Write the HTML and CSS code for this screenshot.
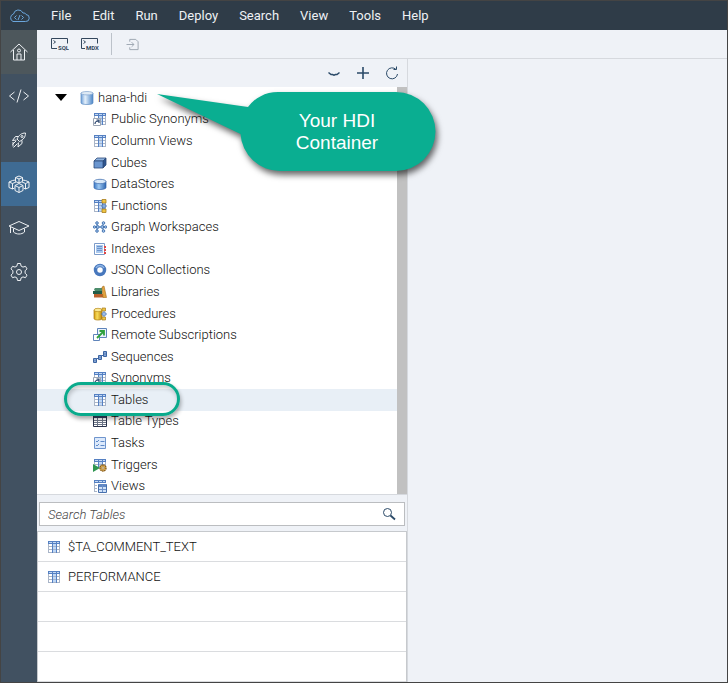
FILE: index.html
```html
<!DOCTYPE html>
<html lang="en">
<head>
<meta charset="utf-8">
<title>Database Explorer</title>
<link rel="stylesheet" href="styles.css">
</head>
<body>
<svg class="sprite" aria-hidden="true">
  <defs>
    <linearGradient id="cyl" x1="0" x2="1" y1="0" y2="0"><stop offset="0" stop-color="#6f9fd8"/><stop offset=".35" stop-color="#e4f0fb"/><stop offset="1" stop-color="#4c86c8"/></linearGradient>
    <linearGradient id="blue" x1="0" x2="1" y1="0" y2="0"><stop offset="0" stop-color="#3c78c4"/><stop offset=".4" stop-color="#9cc8f2"/><stop offset="1" stop-color="#2e66b0"/></linearGradient>
    <linearGradient id="gold" x1="0" x2="1" y1="0" y2="0"><stop offset="0" stop-color="#d39a12"/><stop offset=".4" stop-color="#f8dc5a"/><stop offset="1" stop-color="#bd850c"/></linearGradient>
  </defs>
  <symbol id="grid" viewBox="0 0 14 14">
    <path fill="#a9b5c8" d="M1 1h12v12H1z"/>
    <path fill="#5580c2" d="M1 1h12v3H1zM5 4h1v9H5zM9 4h1v9H9z"/>
    <path fill="#c3d8f3" d="M2 2h3v1H2zM6 2h3v1H6zM10 2h2v1h-2z"/>
    <path fill="#fff" d="M2 4h3v2H2zM2 7h3v2H2zM2 10h3v2H2zM10 4h2v2h-2zM10 7h2v2h-2zM10 10h2v2h-2z"/>
    <path fill="#bdd7f7" d="M6 4h3v2H6zM6 7h3v2H6zM6 10h3v2H6z"/>
  </symbol>
  <symbol id="synonym" viewBox="0 0 14 14">
    <use href="#grid" width="14" height="14"/><path fill="#fff" stroke="#9aa4b3" d="M.5 6.500h7v7h-7z"/><path fill="none" stroke="#29436c" stroke-width="1.200" d="M2 12c0-2 1-3 3.500-3M3.500 8H6v3"/>
  </symbol>
  <symbol id="cube" viewBox="0 0 14 14">
    <path fill="#8fb3de" stroke="#2c4a78" stroke-width=".8" d="M1 5l3-3h9l-3 3z"/><path fill="#2f558e" stroke="#2c4a78" stroke-width=".8" d="M10 5l3-3v7l-3 3z"/><path fill="#6b96cf" stroke="#2c4a78" stroke-width=".8" d="M1 5h9v7H1z"/>
  </symbol>
  <symbol id="store" viewBox="0 0 14 14">
    <path fill="url(#blue)" stroke="#3566ac" stroke-width=".7" d="M1 4.500v6c0 2.700 12 2.700 12 0v-6z"/><ellipse cx="7" cy="4.500" rx="6" ry="2.200" fill="#d8e8f8" stroke="#4a76b4" stroke-width=".8"/>
  </symbol>
  <symbol id="database" viewBox="0 0 14 14">
    <path fill="url(#cyl)" stroke="#5d8cc2" stroke-width=".7" d="M1 2v10c0 2 12 2 12 0V2z"/><ellipse cx="7" cy="2.200" rx="6" ry="1.700" fill="#dfeaf5" stroke="#7fa3ce" stroke-width=".7"/>
  </symbol>
  <symbol id="function" viewBox="0 0 14 14">
    <use href="#grid" width="14" height="14"/><path fill="#efc544" stroke="#a87d1d" stroke-width=".8" d="M9 .5h4v3.500H9zM9 10h4v3.500H9z"/><path fill="#86aadd" stroke="#3e69a6" stroke-width=".8" d="M11 4.500L13.500 7 11 9.500 8.500 7z"/>
  </symbol>
  <symbol id="graph" viewBox="0 0 14 14">
    <path stroke="#4673ad" d="M4 3.500v7M4 7h6M10 3.500v7M1.500 7H4M10 7h2.500"/>
    <g fill="#a9caf0" stroke="#3c6dac" stroke-width=".9"><circle cx="4" cy="3" r="1.300"/><circle cx="4" cy="11" r="1.300"/><circle cx="1.500" cy="7" r="1.200"/><circle cx="4.800" cy="7" r="1.400"/><circle cx="9.200" cy="7" r="1.400"/><circle cx="10.500" cy="3" r="1.300"/><circle cx="10.500" cy="11" r="1.300"/><circle cx="12.600" cy="7" r="1.200"/></g>
  </symbol>
  <symbol id="index" viewBox="0 0 14 14">
    <path fill="#fff" stroke="#7c9bc9" d="M1.500 1.500h10v11h-10z"/><path fill="#a9c8ee" d="M3 3h7v8H3z"/><path stroke="#6b93cb" d="M4 4.500h5M4 6.500h5M4 8.500h5"/><path stroke="#e04545" stroke-width="2" stroke-dasharray="2 1" d="M12 4v9"/>
  </symbol>
  <symbol id="ring" viewBox="0 0 14 14">
    <circle cx="7" cy="7" r="4.500" fill="#fff" stroke="#4878bd" stroke-width="3.500"/><path fill="none" stroke="#92b7e6" stroke-width="1.500" d="M3 5a4.500 4.500 0 0 1 8 0"/>
  </symbol>
  <symbol id="books" viewBox="0 0 14 14">
    <path fill="#4d8d6c" d="M2 3h7v3H2L1 4.500z"/><path fill="#205c48" d="M0 6h9v3H0z"/><path fill="#b9602c" d="M1 9h9v3.500H1z"/><path fill="#e2a440" stroke="#a56a18" stroke-width=".6" d="M9 2l2-1 2.500 11.500H10z"/>
  </symbol>
  <symbol id="procedure" viewBox="0 0 14 14">
    <path fill="url(#gold)" stroke="#a77910" stroke-width=".7" d="M1 3v8.500c0 2 8 2 8 0V3z"/><ellipse cx="5" cy="3" rx="4" ry="1.700" fill="#fae996" stroke="#b98a1a" stroke-width=".7"/><path fill="#efc544" stroke="#a87d1d" stroke-width=".7" d="M9 1h3.500v3H9zM9 10h3.500v3H9z"/><path fill="#9cbce8" stroke="#3e69a6" stroke-width=".8" d="M11 4.500L13.500 7 11 9.500 8.500 7z"/>
  </symbol>
  <symbol id="remote" viewBox="0 0 14 14">
    <path fill="#eaf2fc" stroke="#5f84ba" d="M4.500.5h9v9h-9z"/><path fill="#fff" stroke="#5f84ba" d="M.5 6.500h6v6h-6z"/><path fill="none" stroke="#2fa13c" stroke-width="1.800" d="M4 10l6.500-6.500M6.500 3H11v4.500"/>
  </symbol>
  <symbol id="sequence" viewBox="0 0 14 14">
    <g fill="#9dbbe6" stroke="#3d65a2"><path d="M.5 8.500h3v4h-3zM5.500 5.500h3v4h-3zM10.500 1.500h3v5h-3z"/></g><path stroke="#3d65a2" d="M3.500 8.500h2M8.500 5.500h2M2 9.500v2M7 6.500v2M12 2.500v3"/>
  </symbol>
  <symbol id="tabletype" viewBox="0 0 14 14">
    <path fill="#fff" stroke="#29334c" d="M.5 1.500h13v11H.5z"/><path fill="#334163" d="M1 1h12v3H1z"/><path stroke="#6d7688" d="M1 6.500h12M1 8.500h12M1 10.500h12M4.500 4v8M9.500 4v8"/>
  </symbol>
  <symbol id="task" viewBox="0 0 14 14">
    <path fill="#dce9fb" stroke="#6f95cd" d="M1.500 1.500h11v11h-11z"/><path fill="none" stroke="#5e8ac8" d="M3 5l1 1 2-2M3 9l1 1 2-2M7.500 5.500h4M7.500 9.500h4"/>
  </symbol>
  <symbol id="trigger" viewBox="0 0 14 14">
    <use href="#grid" width="14" height="14"/><path fill="#fff" d="M0 10h14v4H0z"/><path fill="#2f9651" d="M0 6l7 4-7 4z"/><circle cx="10" cy="10" r="3" fill="#e5b85a" stroke="#8b5d17" stroke-width="1.400" stroke-dasharray="1.500 .5"/><circle cx="10" cy="10" r="1.200" fill="#fff" stroke="#8b5d17" stroke-width=".7"/>
  </symbol>
  <symbol id="view" viewBox="0 0 14 14">
    <use href="#grid" width="14" height="14"/><path fill="#fff" d="M4 4h10v10H4z"/><path fill="#cfe1f7" stroke="#466fac" d="M5.500 5.500h8v8h-8z"/><path fill="#5f87c4" d="M6 5h7v3H6z"/><path stroke="#6d90c8" d="M9.500 6v7M6 10.500h7"/>
  </symbol>
</svg>

<div class="app">
  <header class="menubar">
    <svg class="logo" viewBox="0 0 22 14" aria-hidden="true"><path d="M5 12.500h12.500a3.500 3.500 0 0 0 .5-7 2.500 2.500 0 0 0-3-1.500A5 5 0 0 0 5.500 5 4 4 0 0 0 5 12.500z"/><path d="M8.500 6.500l-2 2 2 2M13.500 6.500l2 2-2 2M12 6l-2 5"/></svg>
    <nav class="menus">
      <button>File</button><button>Edit</button><button>Run</button><button>Deploy</button><button>Search</button><button>View</button><button>Tools</button><button>Help</button>
    </nav>
  </header>

  <div class="workspace">
    <nav class="rail">
      <button class="home" aria-label="Home"><svg viewBox="0 0 20 20"><path d="M1.500 10L10 2l8.500 8M4.500 8v10h11V8M8 18v-6h4v6"/><circle cx="10" cy="8.500" r="1.500"/></svg></button>
      <button aria-label="Development"><svg viewBox="0 0 20 20"><path d="M5.500 6L0.500 10l5 4M14.500 6l5 4-5 4M12 3.500L8 16.500"/></svg></button>
      <button aria-label="Run console"><svg viewBox="0 0 20 20"><path d="M16.500 3c-4 0-6.500 2-8.500 6l2.500 2.500c4-2 6-4.500 6-8.500zM9.500 6.500H6.500L3.500 10.500l4-.5M13 10.500v3L9 17l.5-4.500M7 11l-3.500 3.500M4 12v4.500M8.500 13.500L4.500 17.500"/><circle cx="13" cy="6.500" r="1"/></svg></button>
      <button class="active" aria-label="Database Explorer"><svg viewBox="0 0 22 18"><path d="M11 1l3.500 1.500v4L11 8 7.500 6.500v-4zM7.500 2.500L11 4l3.500-1.500M11 4v4M7.500 5L4.500 5.500 1 7v5.500L4.500 14l2-1M1 7l3.500 1.500L8 7M4.500 8.500V14M14.500 5l3 .5L21 7v5.500L17.500 14l-2-1M14 7l3.500 1.500L21 7M17.500 8.500V14M11 8.500l4 2v5L11 17.500l-4-2v-5zM7 10.500l4 2 4-2M11 12.500v5"/></svg></button>
      <button aria-label="Learning"><svg viewBox="0 0 22 18"><path d="M1 7l10-4.500L21 7l-10 4.500zM5.500 9.500V13c3 2.700 8 2.700 11 0V9.500M2.500 8v6"/></svg></button>
      <button aria-label="Settings"><svg viewBox="0 0 20 20"><path d="M8.500 1.500h3l.6 2.600 1.900 1 2.500-.8 1.500 2.600-1.900 1.900v2.400l1.900 1.900-1.500 2.600-2.500-.8-1.900 1-.6 2.600h-3l-.6-2.600-1.900-1-2.500.8L2 13.100l1.900-1.900V8.800L2 6.900l1.500-2.600 2.500.8 1.900-1z"/><circle cx="10" cy="10" r="2.500"/></svg></button>
    </nav>

    <div class="content">
      <div class="toolbar">
        <button aria-label="Open SQL console"><svg viewBox="0 0 18 13"><path d="M6 10.500H.5V.5h16v5M2.500 2.500l2 1.500-2 1.500"/><text x="7" y="12">SQL</text></svg></button>
        <button aria-label="Open MDX console"><svg viewBox="0 0 18 13"><path d="M4 10.500H.5V.5h16v5M2.500 2.500l2 1.500-2 1.500"/><text x="5" y="12">MDX</text></svg></button>
        <span class="divider"></span>
        <button class="muted" aria-label="Import" disabled><svg viewBox="0 0 14 14"><path d="M3.500 4V1.500H10l2.500 2.500v8.500h-9V10M0 7h8M5.500 4.500L8 7l-2.500 2.500"/></svg></button>
      </div>

      <div class="panes">
        <section class="explorer">
          <div class="actions">
            <button aria-label="Collapse"><svg viewBox="0 0 14 14"><path stroke-width="1.500" d="M1.500 6.500L4 8.500h1.500L7 9.200l1.500-.7H10l2.500-2"/></svg></button>
            <button aria-label="Add database"><svg viewBox="0 0 14 14"><path stroke-width="1.600" d="M7 1v12M1 7h12"/></svg></button>
            <button aria-label="Refresh"><svg viewBox="0 0 14 14"><path d="M11 3.500A5.500 5.500 0 1 0 12.500 8M8.500 3.500h3V.5"/></svg></button>
          </div>
          <div class="tree">
            <ul class="nodes">
              <li class="root"><svg class="caret" viewBox="0 0 12 7" aria-hidden="true"><path d="M0 0h12L6 7z"/></svg><svg class="icon"><use href="#database"/></svg>hana-hdi</li>
              <li><svg class="icon"><use href="#synonym"/></svg>Public Synonyms</li>
              <li><svg class="icon"><use href="#grid"/></svg>Column Views</li>
              <li><svg class="icon"><use href="#cube"/></svg>Cubes</li>
              <li><svg class="icon"><use href="#store"/></svg>DataStores</li>
              <li><svg class="icon"><use href="#function"/></svg>Functions</li>
              <li><svg class="icon"><use href="#graph"/></svg>Graph Workspaces</li>
              <li><svg class="icon"><use href="#index"/></svg>Indexes</li>
              <li><svg class="icon"><use href="#ring"/></svg>JSON Collections</li>
              <li><svg class="icon"><use href="#books"/></svg>Libraries</li>
              <li><svg class="icon"><use href="#procedure"/></svg>Procedures</li>
              <li><svg class="icon"><use href="#remote"/></svg>Remote Subscriptions</li>
              <li><svg class="icon"><use href="#sequence"/></svg>Sequences</li>
              <li><svg class="icon"><use href="#synonym"/></svg>Synonyms</li>
              <li class="selected"><svg class="icon"><use href="#grid"/></svg>Tables<span class="marker"></span></li>
              <li><svg class="icon"><use href="#tabletype"/></svg>Table Types</li>
              <li><svg class="icon"><use href="#task"/></svg>Tasks</li>
              <li><svg class="icon"><use href="#trigger"/></svg>Triggers</li>
              <li><svg class="icon"><use href="#view"/></svg>Views</li>
            </ul>
            <span class="scrollbar"></span>
          </div>
          <div class="search">
            <input type="text" placeholder="Search Tables" aria-label="Search Tables">
            <button aria-label="Search"><svg viewBox="0 0 14 14"><circle cx="5.500" cy="5.500" r="4"/><path stroke-width="1.800" d="M8.500 8.500l4.500 4"/></svg></button>
          </div>
          <ul class="results">
            <li><svg class="icon"><use href="#grid"/></svg>$TA_COMMENT_TEXT</li>
            <li><svg class="icon"><use href="#grid"/></svg>PERFORMANCE</li>
            <li></li>
            <li></li>
            <li></li>
          </ul>
        </section>
        <main class="editor"></main>
        <div class="callout">
          <svg viewBox="0 0 280 80" aria-hidden="true"><path d="M0 2L91 15C98 6 108 0 121 0h118a39.500 39.500 0 0 1 0 79H123a39.500 39.500 0 0 1-39.500-37z"/></svg>
          <p>Your HDI<br>Container</p>
        </div>
      </div>
    </div>
  </div>
</div>
</body>
</html>
```

FILE: styles.css
```css
* {
  box-sizing: border-box;
}

body {
  margin: 0;
  font: 300 13px/20px Roboto, "Liberation Sans", sans-serif;
  color: #111;
}

button {
  display: flex;
  align-items: center;
  justify-content: center;
  padding: 0;
  border: 0;
  background: none;
  color: inherit;
  font: inherit;
}

button svg {
  fill: none;
  stroke: currentColor;
}

ul {
  margin: 0;
  padding: 0;
  list-style: none;
}

.sprite {
  position: absolute;
  width: 0;
  height: 0;
}

.app {
  display: flex;
  flex-direction: column;
  height: 100vh;
  border: 1px solid #444;
  background: #eff2f7;
}

.menubar {
  display: flex;
  align-items: center;
  gap: 21px;
  height: 29px;
  padding-left: 7px;
  background: #2f3c48;
  color: #eef1f4;
  font-weight: 400;
}

.logo {
  width: 22px;
  height: 14px;
  fill: none;
  stroke: #6ba6dc;
}

.menus {
  display: flex;
  gap: 21px;
}

.workspace,
.panes {
  display: flex;
  flex: 1;
  min-height: 0;
}

.rail {
  width: 36px;
  background: #415161;
  color: #eef1f4;
}

.rail button {
  width: 100%;
  height: 44px;
}

.rail svg {
  width: 22px;
  height: 20px;
}

.rail .home {
  background: #4d575c;
}

.rail .active {
  background: #3f6b93;
}

.content {
  display: flex;
  flex: 1;
  flex-direction: column;
  min-width: 0;
}

.toolbar {
  display: flex;
  align-items: center;
  gap: 12px;
  height: 29px;
  padding-left: 14px;
  border-bottom: 1px solid #d6d9de;
  color: #33475c;
}

.toolbar svg {
  display: block;
  width: 18px;
  height: 13px;
}

.toolbar text {
  fill: currentColor;
  stroke: none;
  font: bold 6px Roboto, sans-serif;
}

.divider {
  width: 1px;
  height: 22px;
  background: #bcc2ca;
}

.toolbar .muted {
  color: #9aa4af;
}

.panes {
  position: relative;
}

.explorer {
  display: flex;
  flex-direction: column;
  width: 371px;
  border-right: 1px solid #d6d9de;
}

.editor {
  flex: 1;
}

.actions {
  display: flex;
  align-items: center;
  justify-content: flex-end;
  gap: 15px;
  height: 28px;
  padding-right: 8px;
  color: #2b4a68;
}

.actions svg,
.search svg {
  width: 14px;
  height: 14px;
}

.tree {
  display: flex;
  flex: 1;
  min-height: 0;
  overflow: hidden;
  border-bottom: 1px solid #d6d9de;
  background: #fff;
}

.nodes {
  display: grid;
  flex: 1;
  grid-auto-rows: 1fr;
  height: calc(100% + 3px);
}

.nodes li {
  display: flex;
  align-items: center;
  gap: 4px;
  min-height: 0;
  padding-left: 56px;
}

.nodes .root {
  padding-left: 18px;
}

.icon {
  flex: none;
  width: 14px;
  height: 14px;
}

.caret {
  width: 12px;
  height: 7px;
  margin-right: 9px;
}

.nodes .selected {
  position: relative;
  background: #e8eff6;
}

.marker {
  position: absolute;
  z-index: 1;
  top: -7px;
  left: 27px;
  width: 116px;
  height: 34px;
  border: 3px solid #0aab8c;
  border-radius: 17px;
  box-shadow: 1px 3px 4px #0005, inset 1px 3px 4px #0003;
}

.scrollbar {
  width: 10px;
  background: #c1c1c1;
}

.search {
  display: flex;
  margin: 7px 2px 5px;
  border: 1px solid #bbbdc0;
  background: #fff;
  color: #2b4a68;
}

.search input {
  flex: 1;
  min-width: 0;
  height: 22px;
  padding: 0 8px;
  border: 0;
  background: none;
  font: inherit;
}

.search input::placeholder {
  color: #444;
  font-style: italic;
  opacity: 1;
}

.search button {
  width: 30px;
}

.results {
  border: 1px solid #c6c9cd;
  border-bottom: 0;
  background: #fff;
}

.results li {
  display: flex;
  align-items: center;
  gap: 7px;
  height: 30px;
  padding-left: 9px;
  border-bottom: 1px solid #dadcdf;
}

.callout {
  position: absolute;
  z-index: 2;
  top: 33px;
  left: 120px;
  width: 280px;
  height: 80px;
}

.callout svg {
  display: block;
  width: 100%;
  height: 100%;
  overflow: visible;
  fill: #0aae91;
  filter: drop-shadow(2px 4px 3px #0009);
}

.callout p {
  position: absolute;
  inset: 18px 0 auto 80px;
  margin: 0;
  color: #fff;
  font: 19px/22px "Liberation Sans", Arial, sans-serif;
  text-align: center;
}
```
